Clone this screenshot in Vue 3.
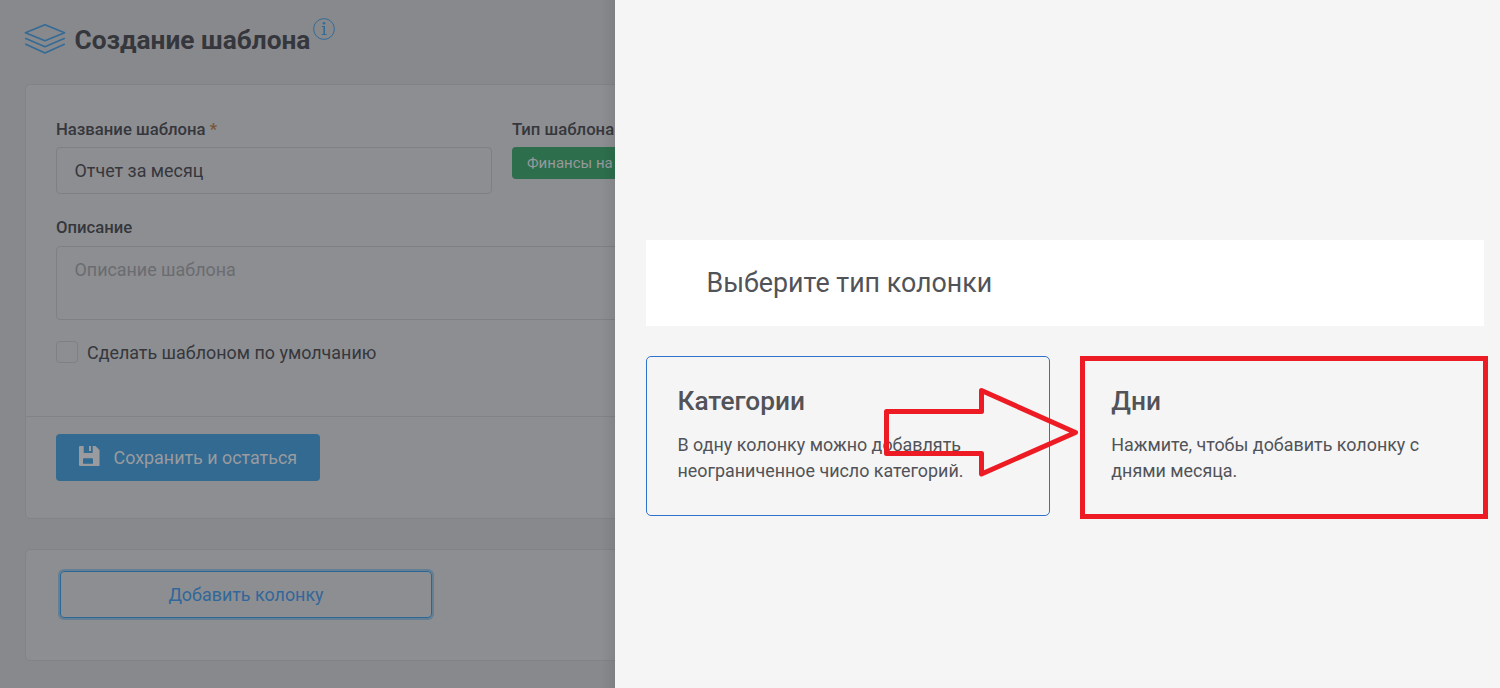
<script setup>
const columnTypes = [
  { title: 'Категории', lines: ['В одну колонку можно добавлять', 'неограниченное число категорий.'], marked: false },
  { title: 'Дни', lines: ['Нажмите, чтобы добавить колонку с', 'днями месяца.'], marked: true },
]
</script>

<template>
  <div class="screen">
    <main class="page">
      <header class="head">
        <svg class="layers" width="42" height="32" viewBox="0 0 42 32" fill="none" stroke="currentColor" stroke-width="1.6" stroke-linejoin="round">
          <path d="M1.4 9.8 21 1.8 40.6 9.8 21 17.8Z" />
          <path d="M1.2 15.3 21 23.8 40.8 15.3" />
          <path d="M1.2 21.1 21 30 40.8 21.1" />
        </svg>
        <h1>Создание шаблона</h1>
        <svg class="info" width="22" height="22" viewBox="0 0 22 22" fill="none" stroke="currentColor">
          <circle cx="11" cy="11" r="10.4" stroke-width="1" />
          <path d="M8.8 8.5H10.7" stroke-width="1" />
          <path d="M11.2 8V16.5" stroke-width="1.6" />
          <path d="M8.8 16.5H13.6" stroke-width="1" />
          <circle cx="11" cy="5.2" r="1.3" fill="currentColor" stroke="none" />
        </svg>
      </header>

      <section class="card form">
        <div class="body">
          <div class="row">
            <div class="name">
              <label>Название шаблона <span class="req">*</span></label>
              <div class="input">Отчет за месяц</div>
            </div>
            <div class="type">
              <label>Тип шаблона</label>
              <div class="badge">Финансы на</div>
            </div>
          </div>
          <label class="desc-label">Описание</label>
          <div class="textarea">Описание шаблона</div>
          <div class="check"><span class="box"></span>Сделать шаблоном по умолчанию</div>
        </div>
        <div class="foot">
          <button class="save">
            <svg width="21" height="20" viewBox="0 0 21 20" fill="currentColor">
              <path fill-rule="evenodd" d="M1 0H4.7V7H13.7V0H16.5L20.5 4V20H1Q0 20 0 19V1Q0 0 1 0ZM5 12.3Q4 12.3 4 13.3V17.8H14V13.3Q14 12.3 13 12.3Z" />
              <path d="M10 0H12V5H10Z" />
            </svg>
            <span>Сохранить и остаться</span>
          </button>
        </div>
      </section>

      <section class="card columns">
        <button class="add">Добавить колонку</button>
      </section>
    </main>

    <aside class="panel">
      <div class="panel-title">Выберите тип колонки</div>
      <div class="options">
        <div v-for="t in columnTypes" :key="t.title" class="option" :class="{ marked: t.marked }">
          <h2>{{ t.title }}</h2>
          <p v-for="l in t.lines" :key="l">{{ l }}</p>
        </div>
        <svg class="arrow" width="196" height="90" viewBox="0 0 196 90">
          <path d="M3.5 24.5H98.5V3.5L192.5 45.5 98.5 87V66.5H3.5Z" fill="none" stroke="#ed1c24" stroke-width="5" stroke-linejoin="round" />
        </svg>
      </div>
    </aside>
  </div>
</template>

<style>
body { margin: 0; overflow: hidden; }
</style>

<style scoped>
* { box-sizing: border-box; }
.screen {
  display: flex;
  width: 1500px;
  height: 688px;
  overflow: hidden;
  font-family: Roboto, "Noto Sans", sans-serif;
  font-size: 17.9px;
  color: #35373c;
}
.page {
  position: relative;
  width: 615px;
  flex: none;
  padding-left: 25px;
  overflow: hidden;
  background: #88898d;
}
.page::after {
  content: "";
  position: absolute;
  inset: 0 0 0 auto;
  width: 14px;
  background: linear-gradient(to right, rgba(0, 0, 0, 0), rgba(0, 0, 0, 0.07));
}
.head {
  display: flex;
  height: 84px;
  align-items: flex-start;
  color: #346b95;
}
.layers { margin: 23px 0 0 -1px; }
h1 {
  margin: 24px 0 0 8.5px;
  width: 236px;
  font-size: 26.25px;
  line-height: 32px;
  font-weight: 700;
  color: #35373c;
  white-space: nowrap;
}
.info { margin: 18px 0 0 2.5px; }
.card {
  width: 700px;
  border: 1px solid #828387;
  border-radius: 5px;
  background: #8d8e92;
}
.form { height: 435px; }
.body { height: 332px; padding: 34px 30px 0; border-bottom: 1px solid #828387; }
.row { display: flex; gap: 20px; }
.name { width: 436px; }
label {
  display: block;
  height: 28px;
  line-height: 21px;
  font-size: 16.7px;
  font-weight: 500;
  white-space: nowrap;
}
.req { color: #7a5537; }
.input, .textarea {
  border: 1px solid #7f8085;
  border-radius: 4px;
  padding: 0 17.5px;
  line-height: 45px;
}
.input { height: 47px; }
.badge {
  width: 180px;
  height: 32px;
  padding: 0 15px;
  border-radius: 4px;
  background: #2d6f4d;
  color: #97999c;
  font-size: 15px;
  line-height: 32px;
  white-space: nowrap;
}
.desc-label { margin-top: 23px; height: 29px; }
.textarea { height: 74px; color: #6a6c6f; width: 640px; }
.check {
  display: flex;
  align-items: center;
  margin-top: 21px;
  height: 22px;
  gap: 9px;
}
.box { width: 22px; height: 22px; border: 1px solid #7f8085; border-radius: 4px; }
.foot { padding: 17px 30px; }
button { font: inherit; margin: 0; }
.save {
  display: flex;
  width: 264px;
  height: 47px;
  padding: 0 0 0 23px;
  align-items: center;
  gap: 13.5px;
  border: 0;
  border-radius: 4px;
  background: #336a92;
  color: #999b9e;
  white-space: nowrap;
}
.save svg { margin-top: -3px; }
.columns { margin-top: 30px; height: 112px; padding: 21px 34px; }
.add {
  display: block;
  width: 372px;
  height: 47px;
  border: 1px solid #2b6794;
  border-radius: 4px;
  background: transparent;
  color: #31679a;
  box-shadow: 0 0 0 2px #647f94;
}
.panel {
  width: 885px;
  padding: 240px 16px 0 31px;
  background: #f5f5f5;
  color: #515358;
}
.panel-title {
  height: 86px;
  padding-left: 60.5px;
  background: #fff;
  font-size: 26.8px;
  line-height: 86px;
}
.options { position: relative; display: flex; gap: 30px; margin-top: 30px; }
.option {
  width: 404px;
  height: 160px;
  flex: none;
  padding: 28px 30px 0 30.5px;
  border: 1px solid #2f72cc;
  border-radius: 5px;
}
.option.marked {
  width: 408px;
  height: 163px;
  padding: 24px 26px 0 26.3px;
  border: 5px solid #ed1c24;
  border-radius: 0;
}
h2 { margin: 0 0 15px; font-size: 26.25px; line-height: 32px; font-weight: 500; }
p { margin: 0; line-height: 26px; white-space: nowrap; }
.arrow { position: absolute; left: 237px; top: 31px; }
</style>
